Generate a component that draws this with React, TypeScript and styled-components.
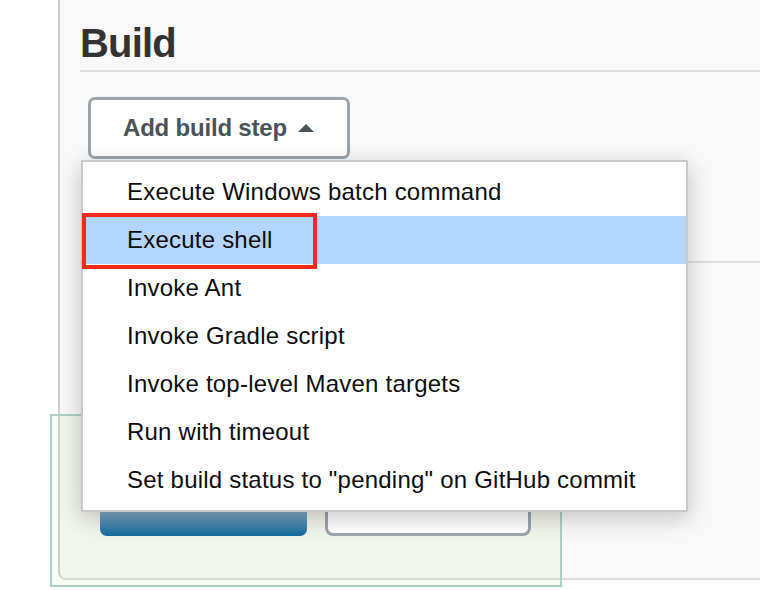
import React from "react";
import styled, { createGlobalStyle } from "styled-components";

const Global = createGlobalStyle`
  html, body { margin: 0; padding: 0; background: #ffffff; }
  body { font-family: "Liberation Sans", Arial, sans-serif; }
  #root { width: 760px; height: 590px; overflow: hidden; position: relative; }
`;

const Page = styled.div`
  position: relative;
  width: 760px;
  height: 590px;
  background: #ffffff;
`;

const Panel = styled.section`
  box-sizing: border-box;
  margin-left: 58px;
  height: 580px;
  background: #f8f8f8;
  border-left: 2px solid #cfcfcf;
  border-bottom: 2px solid #dcdcdc;
  border-bottom-left-radius: 8px;
  padding-left: 20px;
  display: flex;
  flex-direction: column;
`;

const Heading = styled.h2`
  margin: 23px 0 0;
  font-family: "Liberation Sans", Arial, sans-serif;
  font-weight: 700;
  font-size: 40px;
  line-height: 40px;
  letter-spacing: -0.8px;
  color: #333333;
`;

const Divider = styled.div<{ $gap: number }>`
  margin-top: ${(p) => p.$gap}px;
  height: 2px;
  background: #dedede;
`;

const DropWrap = styled.div`
  position: relative;
  margin-top: 25px;
  margin-left: 8px;
  width: 262px;
  z-index: 5;
`;

const DropButton = styled.button`
  box-sizing: border-box;
  width: 262px;
  height: 62px;
  border: 3px solid #9aa5ae;
  border-radius: 7px;
  background: #ffffff;
  display: flex;
  align-items: center;
  gap: 11px;
  padding: 0 0 0 32px;
  font-family: "Liberation Sans", Arial, sans-serif;
  font-weight: 700;
  font-size: 24px;
  letter-spacing: -0.2px;
  color: #4a525a;
  cursor: pointer;
`;

const Menu = styled.ul`
  position: absolute;
  top: 63px;
  left: -7px;
  box-sizing: border-box;
  width: 607px;
  margin: 0;
  padding: 6px 0;
  list-style: none;
  background: #ffffff;
  border: 2px solid #cacaca;
  box-shadow: 0 6px 22px rgba(0, 0, 0, 0.22);
`;

const Item = styled.li<{ $active?: boolean; $marked?: boolean }>`
  position: relative;
  height: 48px;
  display: flex;
  align-items: center;
  padding-left: 44px;
  font-family: "Liberation Sans", Arial, sans-serif;
  font-size: 24px;
  letter-spacing: 0.22px;
  color: #0d0d0d;
  background: ${(p) => (p.$active ? "#b4d5fe" : "transparent")};
  white-space: nowrap;

  ${(p) =>
    p.$marked
      ? `&::after {
          content: "";
          position: absolute;
          left: -1px;
          top: -3px;
          width: 235px;
          height: 56px;
          box-sizing: border-box;
          border: 4px solid #f32a1a;
        }`
      : ""}
`;

const BottomBar = styled.div`
  margin-top: auto;
  margin-bottom: 42px;
  margin-left: 20px;
  display: flex;
  gap: 18px;
`;

const PrimaryButton = styled.button`
  position: relative;
  z-index: 2;
  width: 207px;
  height: 48px;
  border: none;
  border-radius: 7px;
  background: linear-gradient(180deg, #c9d6df 0%, #86a9c3 48%, #12699d 100%);
`;

const SecondaryButton = styled.button`
  position: relative;
  z-index: 2;
  box-sizing: border-box;
  width: 206px;
  height: 48px;
  border: 3px solid #9aa5ad;
  border-radius: 8px;
  background: #ffffff;
`;

const Highlight = styled.div`
  position: absolute;
  left: 50px;
  top: 414px;
  width: 512px;
  height: 173px;
  box-sizing: border-box;
  border: 2px solid #abd0bf;
  background: rgba(208, 228, 168, 0.12);
  pointer-events: none;
  z-index: 1;
`;

const Caret = () => (
  <svg width="16" height="8" viewBox="0 0 16 8" aria-hidden="true">
    <path d="M0 8 L8 0 L16 8 Z" fill="#4a525a" />
  </svg>
);

const steps = [
  "Execute Windows batch command",
  "Execute shell",
  "Invoke Ant",
  "Invoke Gradle script",
  "Invoke top-level Maven targets",
  "Run with timeout",
  'Set build status to "pending" on GitHub commit',
];

export default function App() {
  return (
    <Page>
      <Global />
      <Panel>
        <Heading>Build</Heading>
        <Divider $gap={7} />
        <DropWrap>
          <DropButton>
            Add build step
            <Caret />
          </DropButton>
          <Menu>
            {steps.map((s) => (
              <Item key={s} $active={s === "Execute shell"} $marked={s === "Execute shell"}>
                {s}
              </Item>
            ))}
          </Menu>
        </DropWrap>
        <Divider $gap={102} />
        <BottomBar>
          <PrimaryButton />
          <SecondaryButton />
        </BottomBar>
      </Panel>
      <Highlight />
    </Page>
  );
}
